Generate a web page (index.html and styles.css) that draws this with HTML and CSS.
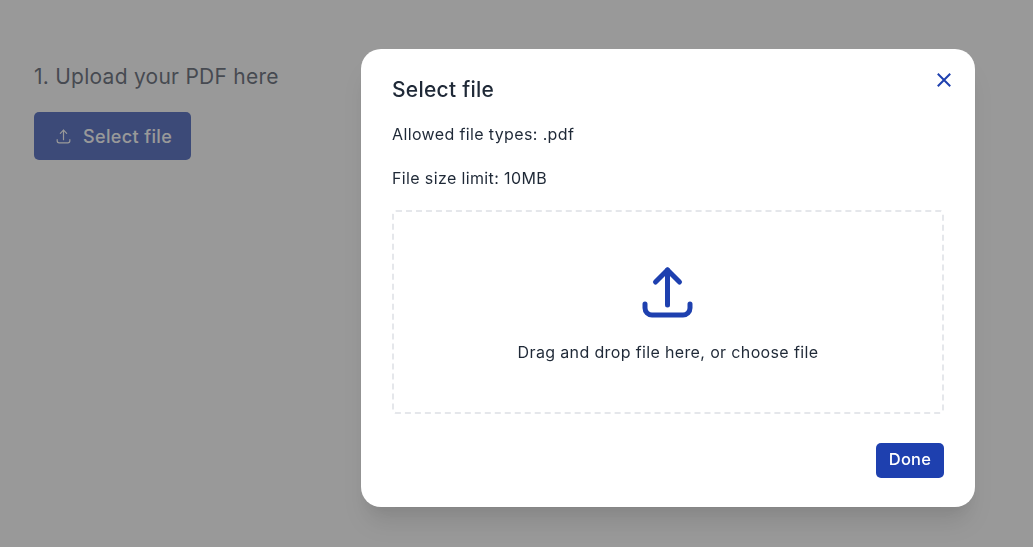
FILE: index.html
```html
<!DOCTYPE html>
<html lang="en">
<head>
<meta charset="utf-8">
<title>Upload</title>
<link rel="stylesheet" href="styles.css">
</head>
<body>
<main class="page">
  <h2 class="step">1. Upload your PDF here</h2>
  <button class="select-btn" type="button">
    <svg class="select-icon" viewBox="0 0 24 24" fill="none" stroke="currentColor" stroke-width="1.5" stroke-linecap="round" stroke-linejoin="round"><path d="M4 16v1.500A2.500 2.500 0 0 0 6.500 20h11a2.500 2.500 0 0 0 2.500-2.500V16"/><path d="M8 8l4-4 4 4"/><path d="M12 4v12"/></svg>
    <span class="select-label">Select file</span>
  </button>
</main>
<div class="overlay">
  <section class="modal">
    <button class="close" type="button" aria-label="Close">
      <svg viewBox="0 0 16 16" fill="none" stroke="currentColor" stroke-width="2" stroke-linecap="square"><path d="M2.500 2.500l11 11M13.500 2.500l-11 11"/></svg>
    </button>
    <h3 class="title">Select file</h3>
    <p class="info">Allowed file types: .pdf</p>
    <p class="info">File size limit: 10MB</p>
    <div class="dropzone">
      <svg class="drop-icon" viewBox="0 0 52 52" fill="none" stroke="currentColor" stroke-width="5" stroke-linecap="round" stroke-linejoin="round"><path d="M3 38v4a7 7 0 0 0 7 7h31a7 7 0 0 0 7-7v-4"/><path d="M13.500 16L25.500 4l12 12"/><path d="M25.500 4v35"/></svg>
      <p class="drop-text">Drag and drop file here, or choose file</p>
    </div>
    <div class="actions"><button class="done" type="button">Done</button></div>
  </section>
</div>
</body>
</html>
```
FILE: styles.css
```css
* { box-sizing: border-box; }
html, body { height: 100%; }
body { margin: 0; background: #fff; font-family: "Inter", "Liberation Sans", sans-serif; overflow: hidden; }
button { font-family: inherit; border: 0; cursor: pointer; }
.page { padding: 63px 34px 0; }
.step { margin: 0 0 21px; font-size: 21px; line-height: 28px; font-weight: 400; letter-spacing: .25px; color: #374151; }
.select-btn { display: flex; align-items: center; gap: 10px; width: 157px; height: 48px; padding: 0 20px; border-radius: 5px; background: #1e40af; color: #fff; font-size: 18px; font-weight: 500; letter-spacing: .36px; }
.select-label { white-space: nowrap; }
.select-icon { flex: none; width: 19px; height: 19px; }
.overlay { position: fixed; inset: 0; background: rgba(81,81,81,.59); }
.modal { position: absolute; left: 361px; top: 49px; width: 614px; height: 458px; padding: 28px 31px 0; background: #fff; border-radius: 20px; box-shadow: 0 20px 25px -5px rgba(0,0,0,.1), 0 10px 10px -5px rgba(0,0,0,.04); }
.close { position: absolute; top: 23px; right: 23px; width: 16px; height: 16px; padding: 0; background: none; color: #1e40af; }
.close svg { display: block; width: 16px; height: 16px; }
.title { margin: 0 0 19px; font-size: 21px; line-height: 26px; font-weight: 500; letter-spacing: .25px; color: #1f2937; }
.info { margin: 0 0 20px; font-size: 16px; line-height: 24px; letter-spacing: .37px; color: #1f2937; }
.dropzone { display: flex; flex-direction: column; align-items: center; height: 204px; padding-top: 54px; border: 2px dashed #e5e7eb; border-radius: 4px; }
.drop-icon { width: 52px; height: 52px; color: #1e40af; }
.drop-text { margin: 22px 0 0; font-size: 16px; line-height: 24px; letter-spacing: .36px; color: #1f2937; }
.actions { display: flex; justify-content: flex-end; margin-top: 29px; }
.done { width: 68px; height: 35px; padding: 0 0 3px; border-radius: 5px; background: #1e40af; color: #fff; font-size: 16.500px; font-weight: 500; letter-spacing: .2px; }
```
